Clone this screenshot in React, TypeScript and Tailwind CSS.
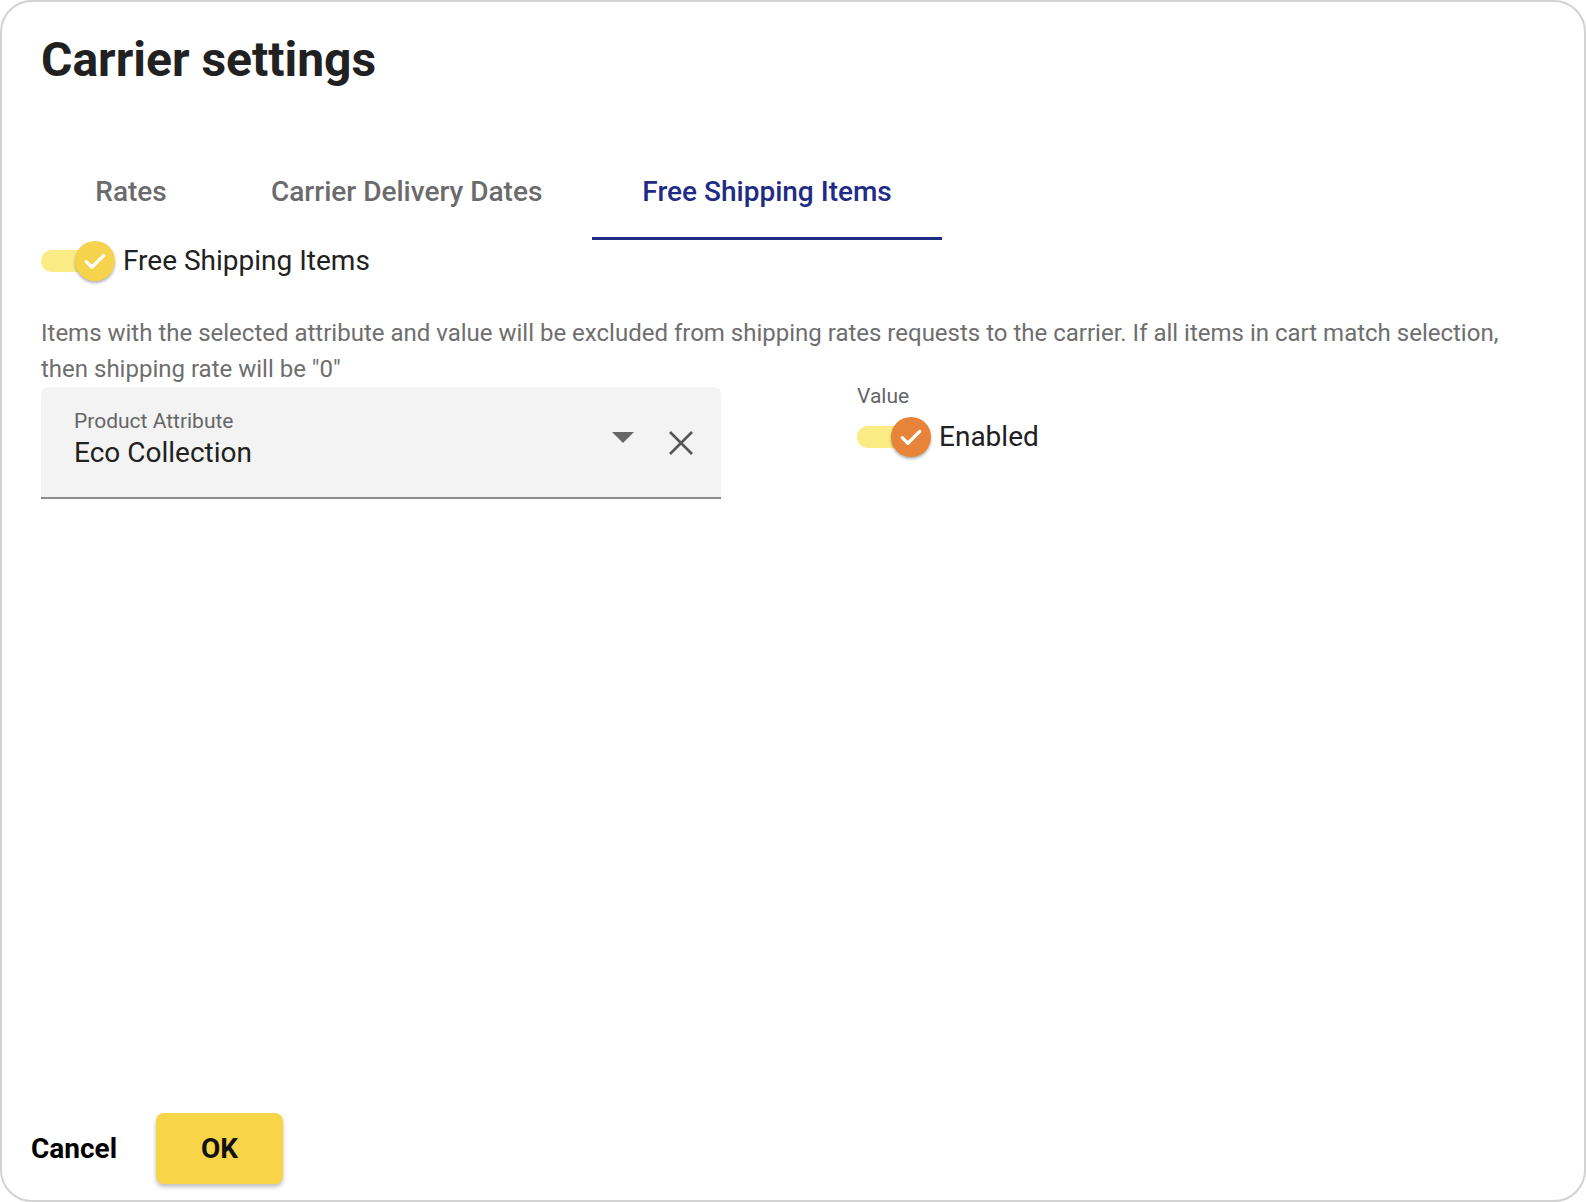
import { useState } from "react";

function CheckSwitch({ on, thumb, onToggle }: { on: boolean; thumb: string; onToggle: () => void }) {
  return (
    <button
      type="button"
      onClick={onToggle}
      className="relative w-[74px] h-[40px] shrink-0 cursor-pointer"
    >
      <span className="absolute left-0 top-[9px] w-[60px] h-[22px] rounded-full bg-[#fbec86]" />
      <span
        className={`absolute top-0 w-[40px] h-[40px] rounded-full flex items-center justify-center shadow-[0_2px_3px_rgba(0,0,0,0.3)] ${on ? "right-0" : "left-0"} ${thumb}`}
      >
        <svg width="30" height="30" viewBox="0 0 24 24" fill="none">
          <path d="M5 12.5l4.5 4.5L19 7.5" stroke="#fff" strokeWidth="2.6" strokeLinecap="round" strokeLinejoin="round" />
        </svg>
      </span>
    </button>
  );
}

const tabs = ["Rates", "Carrier Delivery Dates", "Free Shipping Items"];

export default function App() {
  const [tab, setTab] = useState(2);
  const [freeOn, setFreeOn] = useState(true);
  const [valueOn, setValueOn] = useState(true);

  return (
    <div className="w-[1586px] h-[1202px] bg-white font-[Roboto,sans-serif]">
      <div className="w-full h-full border-2 border-[#d2d2d2] rounded-[32px] flex flex-col pl-[39px] pr-[39px]">
        <h1 className="mt-[34px] text-[48px] leading-none font-bold text-[#212121]">Carrier settings</h1>

        {/* Tabs */}
        <div className="mt-[60px] flex">
          {tabs.map((t, i) => (
            <button
              key={t}
              onClick={() => setTab(i)}
              className={`relative h-[96px] px-[50px] min-w-[180px] flex items-center justify-center text-[28px] font-medium ${tab === i ? "text-[#1f2c86]" : "text-[#6b6b6b]"}`}
            >
              {t}
              {tab === i && <span className="absolute left-0 right-0 bottom-0 h-[3px] bg-[#1f2c86]" />}
            </button>
          ))}
        </div>

        {/* Free shipping toggle */}
        <div className="h-[42px] flex items-center gap-[8px]">
          <CheckSwitch on={freeOn} thumb="bg-[#f5d34c]" onToggle={() => setFreeOn(!freeOn)} />
          <span className="text-[28px] text-[#212121]">Free Shipping Items</span>
        </div>

        <p className="mt-[33px] text-[24px] leading-[36px] text-[#6e6e6e]">
          Items with the selected attribute and value will be excluded from shipping rates requests to the carrier. If all items in cart match selection,
          <br />
          then shipping rate will be "0"
        </p>

        <div className="flex items-start">
          {/* Product attribute select */}
          <div className="w-[680px] h-[112px] bg-[#f3f3f3] rounded-t-[8px] border-b-2 border-[#8c8c8c] flex items-start pl-[33px] pr-[27px]">
            <div className="flex-1 flex flex-col pt-[21px]">
              <span className="text-[21px] leading-[26px] text-[#666]">Product Attribute</span>
              <span className="mt-[1px] text-[28px] leading-[36px] text-[#212121]">Eco Collection</span>
            </div>
            <svg className="mt-[45px]" width="22" height="11" viewBox="0 0 22 11">
              <path d="M0 0h22L11 11z" fill="#666" />
            </svg>
            <svg className="mt-[43px] ml-[34px]" width="26" height="26" viewBox="0 0 26 26">
              <path d="M2 2l22 22M24 2L2 24" stroke="#555" strokeWidth="2.6" />
            </svg>
          </div>

          {/* Value */}
          <div className="ml-[136px] -mt-[4px] flex flex-col">
            <span className="text-[21px] leading-[26px] text-[#666]">Value</span>
            <div className="h-[56px] flex items-center gap-[8px]">
              <CheckSwitch on={valueOn} thumb="bg-[#e8833a]" onToggle={() => setValueOn(!valueOn)} />
              <span className="text-[28px] text-[#212121]">Enabled</span>
            </div>
          </div>
        </div>

        {/* Footer */}
        <div className="mt-auto mb-[16px] -ml-[10px] flex items-center">
          <button className="text-[28px] font-bold text-black">Cancel</button>
          <button className="ml-[39px] w-[127px] h-[71px] rounded-[8px] bg-[#f8d548] text-[28px] font-bold text-[#111] shadow-[0_3px_4px_rgba(0,0,0,0.25)]">
            OK
          </button>
        </div>
      </div>
    </div>
  );
}
